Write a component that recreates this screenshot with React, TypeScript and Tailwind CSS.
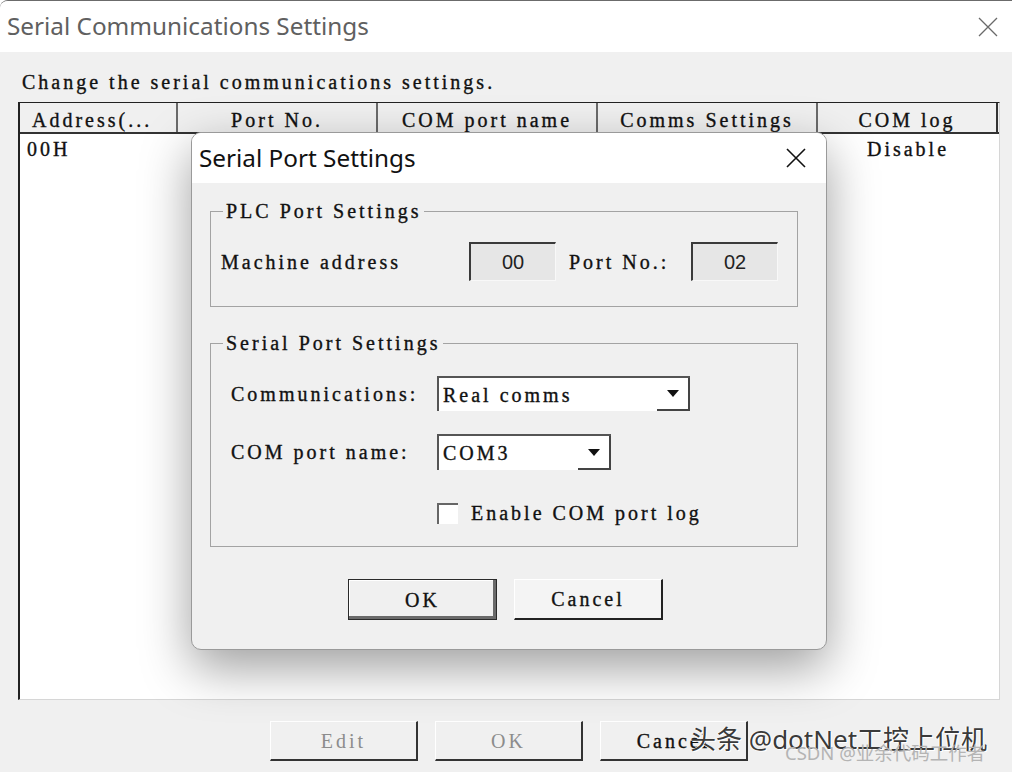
import React from 'react';

const MONO =
  "font-['Liberation_Serif',serif] text-[20px] tracking-[3px] text-[#111] [-webkit-text-stroke:0.35px_#111]";

function CloseX({ size, color, stroke }: { size: number; color: string; stroke: number }) {
  return (
    <svg width={size} height={size} viewBox="0 0 20 20" fill="none">
      <path d="M1 1L19 19M19 1L1 19" stroke={color} strokeWidth={stroke} />
    </svg>
  );
}

function DropArrow() {
  return (
    <svg width="14" height="9" viewBox="0 0 14 9">
      <polygon points="1,1 13,1 7,8" fill="#111" />
    </svg>
  );
}

function Combo({ value, width, height }: { value: string; width: string; height: string }) {
  return (
    <div className={`flex ${width} ${height} bg-white border-t-2 border-l-2 border-[#555]`}>
      <div className={`flex-1 flex items-center pl-[4px] ${MONO}`}>{value}</div>
      <div className="w-[33px] flex items-center justify-center border-r-2 border-b-2 border-[#444] bg-white">
        <DropArrow />
      </div>
    </div>
  );
}

function Field({ value }: { value: string }) {
  return (
    <div className="w-[87px] h-[39px] flex items-center justify-center bg-[#e6e6e6] border-t-2 border-l-2 border-[#3a3a3a] border-r border-b border-r-[#f8f8f8] border-b-[#f8f8f8] font-['Liberation_Sans',Arial,sans-serif] text-[20px] text-[#222]">
      {value}
    </div>
  );
}

function OuterButton({ label, disabled }: { label: string; disabled?: boolean }) {
  return (
    <div
      className={`w-[148px] h-[40px] flex items-center justify-center bg-[#f0f0f0] border-t border-l border-white border-r-2 border-b-2 border-r-[#333] border-b-[#333] font-['Liberation_Serif',serif] text-[20px] tracking-[3px] ${
        disabled ? 'text-[#8c8c8c]' : 'text-[#111] [-webkit-text-stroke:0.35px_#111]'
      }`}
    >
      {label}
    </div>
  );
}

const COLUMNS = [
  { label: 'Address(...', align: 'justify-start pl-[12px]' },
  { label: 'Port No.', align: 'justify-center' },
  { label: 'COM port name', align: 'justify-center' },
  { label: 'Comms Settings', align: 'justify-center' },
  { label: 'COM log', align: 'justify-center' },
];

export default function App() {
  return (
    <div className="w-[1012px] h-[772px] relative overflow-hidden bg-[#f0f0f0] border-t border-[#6b6b6b] rounded-tl-[8px]">
      {/* outer window title bar */}
      <div className="h-[51px] bg-white flex items-center justify-between pl-[7px] pr-[14px]">
        <span className="font-['Noto_Sans',sans-serif] text-[24.3px] text-[#606060]">
          Serial Communications Settings
        </span>
        <CloseX size={20} color="#6a6a6a" stroke={1.3} />
      </div>

      <div className="pl-[18px]">
        <p className={`mt-[18px] h-[24px] leading-[24px] pl-[4px] ${MONO}`}>Change the serial communications settings.</p>

        {/* list view */}
        <div className="mt-[8px] w-[982px] h-[598px] bg-white border-l-2 border-t border-[#222] border-r border-b border-r-[#d6d6d6] border-b-[#d6d6d6] flex flex-col">
          <div className="grid grid-cols-[158px_200px_220px_220px_180px] h-[31px] bg-[#f0f0f0] border-b-2 border-[#333]">
            {COLUMNS.map((c, i) => (
              <div
                key={c.label}
                className={`flex items-end leading-[24px] ${c.align} ${MONO} ${i < 4 ? 'border-r-2 border-[#6a6a6a]' : 'border-r-2 border-[#333]'}`}
              >
                {c.label}
              </div>
            ))}
          </div>
          <div className="grid grid-cols-[158px_200px_220px_220px_180px] h-[26px] items-center">
            <div className={`pl-[7px] ${MONO}`}>00H</div>
            <div />
            <div />
            <div />
            <div className={`text-center ${MONO}`}>Disable</div>
          </div>
        </div>

        {/* bottom buttons */}
        <div className="mt-[21px] ml-[252px] flex gap-[17px]">
          <OuterButton label="Edit" disabled />
          <OuterButton label="OK" disabled />
          <OuterButton label="Cancel" />
        </div>
      </div>

      {/* modal dialog */}
      <div className="absolute left-[191px] top-[131px] w-[636px] h-[518px] rounded-[10px] border border-[#9a9a9a] bg-[#f0f0f0] shadow-[0_18px_50px_rgba(0,0,0,0.38)] overflow-hidden flex flex-col">
        <div className="h-[50px] shrink-0 bg-white flex items-center justify-between pl-[7px] pr-[20px]">
          <span className="font-['Noto_Sans',sans-serif] text-[24.3px] text-[#111]">Serial Port Settings</span>
          <CloseX size={20} color="#111" stroke={1.6} />
        </div>

        <div className="pl-[18px] pt-[16px] flex flex-col">
          <fieldset className="w-[588px] border border-[#a3a3a3] pl-[10px] pb-[25px]">
            <legend className={`ml-[2px] px-[3px] h-[24px] leading-[24px] ${MONO}`}>PLC Port Settings</legend>
            <div className="mt-[19px] flex items-center h-[39px]">
              <span className={`w-[248px] ${MONO}`}>Machine address</span>
              <Field value="00" />
              <span className={`ml-[13px] w-[122px] ${MONO}`}>Port No.:</span>
              <Field value="02" />
            </div>
          </fieldset>

          <fieldset className="mt-[24px] w-[588px] border border-[#a3a3a3] pl-[20px] pb-[22px]">
            <legend className={`-ml-[8px] px-[3px] h-[24px] leading-[24px] ${MONO}`}>Serial Port Settings</legend>
            <div className="mt-[21px] flex items-center">
              <span className={`w-[206px] ${MONO}`}>Communications:</span>
              <Combo value="Real comms" width="w-[253px]" height="h-[35px]" />
            </div>
            <div className="mt-[23px] flex items-center">
              <span className={`w-[206px] ${MONO}`}>COM port name:</span>
              <Combo value="COM3" width="w-[174px]" height="h-[36px]" />
            </div>
            <div className="mt-[32px] ml-[206px] flex items-center h-[22px]">
              <div className="w-[21px] h-[21px] bg-white border-t-2 border-l-2 border-[#666]" />
              <span className={`ml-[13px] ${MONO}`}>Enable COM port log</span>
            </div>
          </fieldset>

          <div className="mt-[32px] ml-[138px] flex gap-[17px]">
            <div className={`w-[149px] h-[41px] flex items-center justify-center bg-[#f0f0f0] border border-[#2a2a2a] shadow-[inset_-3px_-3px_0_#6a6a6a,inset_1px_1px_0_#fff] ${MONO}`}>
              OK
            </div>
            <div className={`w-[149px] h-[41px] flex items-center justify-center bg-[#f4f4f4] border-t border-l border-white border-r-2 border-b-2 border-r-[#222] border-b-[#222] ${MONO}`}>
              Cancel
            </div>
          </div>
        </div>
      </div>

      {/* watermark */}
      <div className="absolute left-[690px] top-[723px] font-['Noto_Sans','Noto_Sans_CJK_SC',sans-serif] text-[26px] leading-[30px] text-[#3a3a3a] [text-shadow:1px_1px_0_#fff,-1px_0_0_#fff]">
        头条 @dotNet工控上位机
      </div>
      <div className="absolute left-[785px] top-[740px] font-['Noto_Sans','Noto_Sans_CJK_SC',sans-serif] text-[18.5px] leading-[24px] text-[#b4b4b4]">
        CSDN @业余代码工作者
      </div>
    </div>
  );
}
